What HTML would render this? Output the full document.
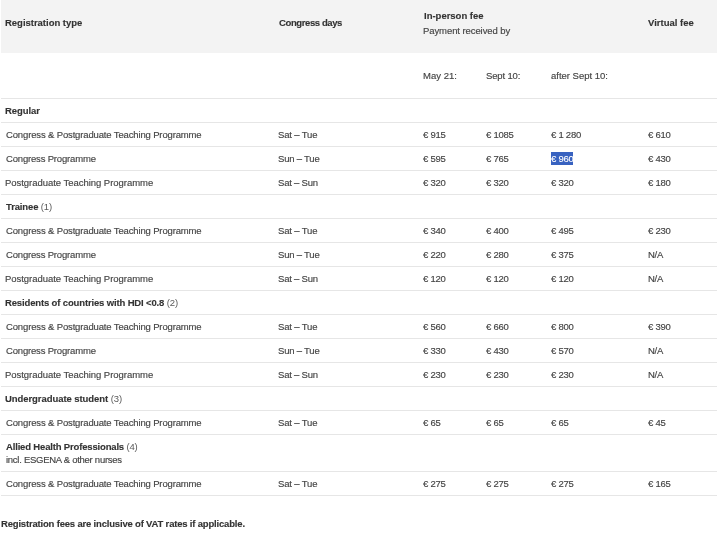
<!DOCTYPE html>
<html><head><meta charset="utf-8"><style>
html,body{margin:0;padding:0;background:#fff;width:717px;height:543px;overflow:hidden;position:relative}
body{font-family:"Liberation Sans",sans-serif;font-size:9.5px}
.hd{position:absolute;left:1px;top:0;width:716px;height:53px;background:#f3f3f3}
.ln{position:absolute;left:1px;width:716px;height:1px;background:#e6e6e6}
.t,.b{position:absolute;white-space:nowrap;line-height:12px;margin-top:-9.5px;letter-spacing:-0.13px;will-change:transform}
.t{color:#444;-webkit-text-stroke:0.15px #444}
.b{color:#333;font-weight:bold;letter-spacing:-0.08px;-webkit-text-stroke:0.12px #333}
.n{font-weight:normal;color:#5a5a5a;-webkit-text-stroke:0}
.sbox{position:absolute;left:551px;top:152px;width:22px;height:13px;background:#3862c0}
.sel{color:#fff;-webkit-text-stroke:0.1px #fff}
</style></head><body>
<div class="hd"></div>
<div class="ln" style="top:98px"></div>
<div class="ln" style="top:122px"></div>
<div class="ln" style="top:146px"></div>
<div class="ln" style="top:170px"></div>
<div class="ln" style="top:194px"></div>
<div class="ln" style="top:218px"></div>
<div class="ln" style="top:242px"></div>
<div class="ln" style="top:266px"></div>
<div class="ln" style="top:290px"></div>
<div class="ln" style="top:314px"></div>
<div class="ln" style="top:338px"></div>
<div class="ln" style="top:362px"></div>
<div class="ln" style="top:386px"></div>
<div class="ln" style="top:410px"></div>
<div class="ln" style="top:434px"></div>
<div class="ln" style="top:471px"></div>
<div class="ln" style="top:495px"></div>
<div class="sbox"></div>
<div class="b" style="left:5px;top:26px;letter-spacing:-0.019px">Registration type</div>
<div class="b" style="left:279px;top:26px;letter-spacing:-0.392px">Congress days</div>
<div class="b" style="left:424px;top:19px;letter-spacing:-0.008px">In-person fee</div>
<div class="t" style="left:423px;top:34px;letter-spacing:-0.083px">Payment received by</div>
<div class="b" style="left:648px;top:26px;letter-spacing:0.010px">Virtual fee</div>
<div class="t" style="left:423px;top:79px;letter-spacing:0.033px">May 21:</div>
<div class="t" style="left:486px;top:79px;letter-spacing:-0.143px">Sept 10:</div>
<div class="t" style="left:551px;top:79px;letter-spacing:-0.015px">after Sept 10:</div>
<div class="b" style="left:5px;top:114px">Regular</div>
<div class="t" style="left:6px;top:138px;letter-spacing:-0.144px">Congress &amp; Postgraduate Teaching Programme</div>
<div class="t" style="left:278px;top:138px;letter-spacing:-0.150px">Sat – Tue</div>
<div class="t" style="left:423px;top:138px;letter-spacing:-0.25px">€ 915</div>
<div class="t" style="left:486px;top:138px;letter-spacing:-0.25px">€ 1085</div>
<div class="t" style="left:551px;top:138px;letter-spacing:-0.25px">€ 1 280</div>
<div class="t" style="left:648px;top:138px;letter-spacing:-0.25px">€ 610</div>
<div class="t" style="left:6px;top:162px;letter-spacing:-0.176px">Congress Programme</div>
<div class="t" style="left:278px;top:162px;letter-spacing:-0.200px">Sun – Tue</div>
<div class="t" style="left:423px;top:162px;letter-spacing:-0.25px">€ 595</div>
<div class="t" style="left:486px;top:162px;letter-spacing:-0.25px">€ 765</div>
<div class="t" style="left:551px;top:162px;letter-spacing:-0.25px"><span class="sel">€ 960</span></div>
<div class="t" style="left:648px;top:162px;letter-spacing:-0.25px">€ 430</div>
<div class="t" style="left:5px;top:186px;letter-spacing:-0.037px">Postgraduate Teaching Programme</div>
<div class="t" style="left:278px;top:186px;letter-spacing:-0.200px">Sat – Sun</div>
<div class="t" style="left:423px;top:186px;letter-spacing:-0.25px">€ 320</div>
<div class="t" style="left:486px;top:186px;letter-spacing:-0.25px">€ 320</div>
<div class="t" style="left:551px;top:186px;letter-spacing:-0.25px">€ 320</div>
<div class="t" style="left:648px;top:186px;letter-spacing:-0.25px">€ 180</div>
<div class="b" style="left:6px;top:210px;letter-spacing:-0.140px">Trainee <span class="n">(1)</span></div>
<div class="t" style="left:6px;top:234px;letter-spacing:-0.144px">Congress &amp; Postgraduate Teaching Programme</div>
<div class="t" style="left:278px;top:234px;letter-spacing:-0.150px">Sat – Tue</div>
<div class="t" style="left:423px;top:234px;letter-spacing:-0.25px">€ 340</div>
<div class="t" style="left:486px;top:234px;letter-spacing:-0.25px">€ 400</div>
<div class="t" style="left:551px;top:234px;letter-spacing:-0.25px">€ 495</div>
<div class="t" style="left:648px;top:234px;letter-spacing:-0.25px">€ 230</div>
<div class="t" style="left:6px;top:258px;letter-spacing:-0.176px">Congress Programme</div>
<div class="t" style="left:278px;top:258px;letter-spacing:-0.200px">Sun – Tue</div>
<div class="t" style="left:423px;top:258px;letter-spacing:-0.25px">€ 220</div>
<div class="t" style="left:486px;top:258px;letter-spacing:-0.25px">€ 280</div>
<div class="t" style="left:551px;top:258px;letter-spacing:-0.25px">€ 375</div>
<div class="t" style="left:648px;top:258px;letter-spacing:-0.25px">N/A</div>
<div class="t" style="left:5px;top:282px;letter-spacing:-0.037px">Postgraduate Teaching Programme</div>
<div class="t" style="left:278px;top:282px;letter-spacing:-0.200px">Sat – Sun</div>
<div class="t" style="left:423px;top:282px;letter-spacing:-0.25px">€ 120</div>
<div class="t" style="left:486px;top:282px;letter-spacing:-0.25px">€ 120</div>
<div class="t" style="left:551px;top:282px;letter-spacing:-0.25px">€ 120</div>
<div class="t" style="left:648px;top:282px;letter-spacing:-0.25px">N/A</div>
<div class="b" style="left:5px;top:306px;letter-spacing:-0.144px">Residents of countries with HDI &lt;0.8 <span class="n">(2)</span></div>
<div class="t" style="left:6px;top:330px;letter-spacing:-0.144px">Congress &amp; Postgraduate Teaching Programme</div>
<div class="t" style="left:278px;top:330px;letter-spacing:-0.150px">Sat – Tue</div>
<div class="t" style="left:423px;top:330px;letter-spacing:-0.25px">€ 560</div>
<div class="t" style="left:486px;top:330px;letter-spacing:-0.25px">€ 660</div>
<div class="t" style="left:551px;top:330px;letter-spacing:-0.25px">€ 800</div>
<div class="t" style="left:648px;top:330px;letter-spacing:-0.25px">€ 390</div>
<div class="t" style="left:6px;top:354px;letter-spacing:-0.176px">Congress Programme</div>
<div class="t" style="left:278px;top:354px;letter-spacing:-0.200px">Sun – Tue</div>
<div class="t" style="left:423px;top:354px;letter-spacing:-0.25px">€ 330</div>
<div class="t" style="left:486px;top:354px;letter-spacing:-0.25px">€ 430</div>
<div class="t" style="left:551px;top:354px;letter-spacing:-0.25px">€ 570</div>
<div class="t" style="left:648px;top:354px;letter-spacing:-0.25px">N/A</div>
<div class="t" style="left:5px;top:378px;letter-spacing:-0.037px">Postgraduate Teaching Programme</div>
<div class="t" style="left:278px;top:378px;letter-spacing:-0.200px">Sat – Sun</div>
<div class="t" style="left:423px;top:378px;letter-spacing:-0.25px">€ 230</div>
<div class="t" style="left:486px;top:378px;letter-spacing:-0.25px">€ 230</div>
<div class="t" style="left:551px;top:378px;letter-spacing:-0.25px">€ 230</div>
<div class="t" style="left:648px;top:378px;letter-spacing:-0.25px">N/A</div>
<div class="b" style="left:5px;top:402px;letter-spacing:-0.067px">Undergraduate student <span class="n">(3)</span></div>
<div class="t" style="left:6px;top:426px;letter-spacing:-0.144px">Congress &amp; Postgraduate Teaching Programme</div>
<div class="t" style="left:278px;top:426px;letter-spacing:-0.150px">Sat – Tue</div>
<div class="t" style="left:423px;top:426px;letter-spacing:-0.25px">€ 65</div>
<div class="t" style="left:486px;top:426px;letter-spacing:-0.25px">€ 65</div>
<div class="t" style="left:551px;top:426px;letter-spacing:-0.25px">€ 65</div>
<div class="t" style="left:648px;top:426px;letter-spacing:-0.25px">€ 45</div>
<div class="b" style="left:6px;top:450px;letter-spacing:-0.167px">Allied Health Professionals <span class="n">(4)</span></div>
<div class="t" style="left:6px;top:463px;letter-spacing:-0.269px">incl. ESGENA &amp; other nurses</div>
<div class="t" style="left:6px;top:487px;letter-spacing:-0.144px">Congress &amp; Postgraduate Teaching Programme</div>
<div class="t" style="left:278px;top:487px;letter-spacing:-0.150px">Sat – Tue</div>
<div class="t" style="left:423px;top:487px;letter-spacing:-0.25px">€ 275</div>
<div class="t" style="left:486px;top:487px;letter-spacing:-0.25px">€ 275</div>
<div class="t" style="left:551px;top:487px;letter-spacing:-0.25px">€ 275</div>
<div class="t" style="left:648px;top:487px;letter-spacing:-0.25px">€ 165</div>
<div class="b" style="left:1px;top:527px;letter-spacing:-0.183px">Registration fees are inclusive of VAT rates if applicable.</div>
</body></html>
